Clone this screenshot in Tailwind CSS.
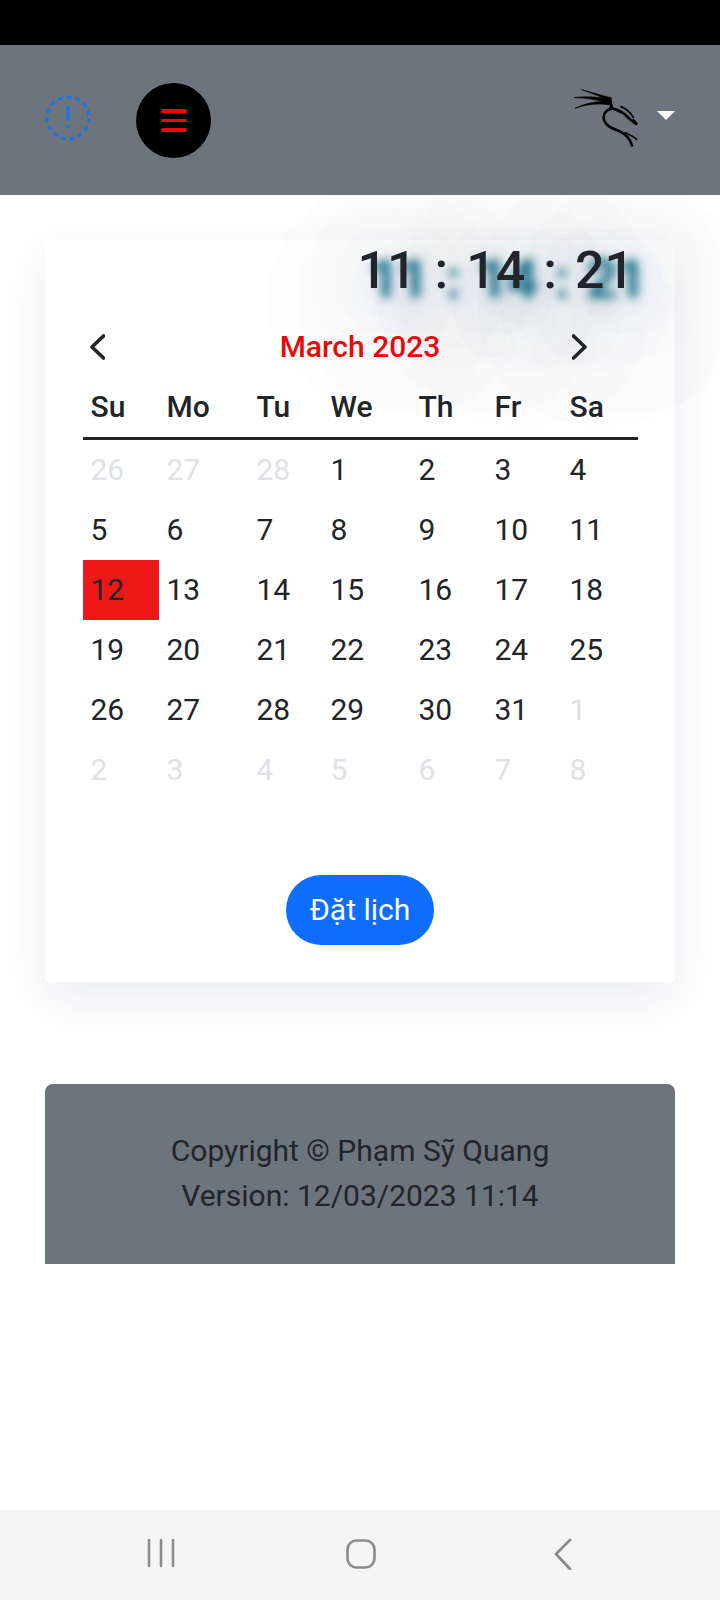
<!DOCTYPE html>
<html>
<head>
<meta charset="utf-8">
<script src="https://cdn.jsdelivr.net/npm/@tailwindcss/browser@4"></script>
</head>
<body class="font-['Roboto',sans-serif] bg-white text-[#212529]">
<div class="w-[720px] h-[1600px] flex flex-col overflow-hidden">
  <div class="h-[45px] bg-black shrink-0"></div>
  <header class="h-[150px] bg-[#6c757d] shrink-0 flex items-start relative z-10">
    <svg class="ml-[45px] mt-[50px] w-[46px] h-[46px]" viewBox="0 0 46 46" fill="none">
      <circle cx="23" cy="23" r="21" stroke="#1f74e4" stroke-width="3" stroke-dasharray="5 3.8"/>
      <path d="M23 11v15" stroke="#1f74e4" stroke-width="3.4"/>
      <circle cx="23" cy="32" r="2" fill="#1f74e4"/>
    </svg>
    <div class="ml-[45px] mt-[38px] w-[75px] h-[75px] rounded-full bg-black flex flex-col items-center justify-center gap-[6px]">
      <span class="block w-[26px] h-[3.5px] rounded-full bg-[#ff0000]"></span>
      <span class="block w-[26px] h-[3.5px] rounded-full bg-[#ff0000]"></span>
      <span class="block w-[26px] h-[3.5px] rounded-full bg-[#ff0000]"></span>
    </div>
    <svg class="ml-[362px] mt-[43px] w-[67px] h-[59px]" viewBox="100 55 200 175" fill="none" stroke="#000" stroke-linecap="round">
      <path d="M127 60 L214 84 L210 95 C185 80 155 70 127 60Z" fill="#000" stroke-width="2"/>
      <path d="M105 83 C140 78 180 82 210 88 L208 99 C175 90 140 84 105 83Z" fill="#000" stroke-width="2"/>
      <path d="M107 115 C135 100 175 92 208 95 L214 105 C175 100 140 102 107 115Z" fill="#000" stroke-width="2"/>
      <path d="M210 86 L216 116" stroke-width="9"/>
      <path d="M216 116 C198 120 190 132 192 146 C195 166 215 175 240 184 C258 192 270 205 276 226" stroke-width="8"/>
      <path d="M256 188 C270 194 282 200 290 208" stroke-width="5"/>
      <path d="M212 113 C235 120 255 128 268 146 C275 152 282 158 291 163 L280 150" stroke-width="8"/>
      <path d="M243 110 C258 116 272 128 280 142" stroke-width="5"/>
    </svg>
    <span class="ml-[17px] mt-[66px] w-0 h-0 border-x-[9px] border-x-transparent border-t-[9px] border-t-white"></span>
  </header>

  <main class="px-[45px] pt-[45px]">
    <section class="h-[742px] rounded-[8px] bg-white shadow-[0_16px_48px_rgba(40,60,110,0.09)] flex flex-col">
      <div class="h-[60px] pr-[41px] flex justify-end items-center pt-[2px] text-[52px] font-medium leading-none whitespace-pre [word-spacing:5px] [text-shadow:12px_9px_9px_rgba(20,105,135,0.95),12px_9px_14px_rgba(20,105,135,0.6),12px_14px_60px_rgba(20,100,130,0.5),12px_30px_120px_rgba(20,100,130,0.55),12px_30px_120px_rgba(20,100,130,0.55)]">11 : 14 : 21</div>
      <div class="mt-[26px] px-[38px] relative">
        <div class="h-[38px] flex items-center justify-between pt-[4px]">
          <svg class="ml-[7px] w-[15px] h-[26px]" viewBox="0 0 15 26" fill="none" stroke="#212529" stroke-width="3.6" stroke-linecap="round" stroke-linejoin="round"><path d="M13.5 2 2 13l11.5 11"/></svg>
          <span class="text-[30px] font-medium text-[#e60a0a] leading-none ml-[43px]">March 2023</span>
          <svg class="mr-[50px] w-[15px] h-[26px]" viewBox="0 0 15 26" fill="none" stroke="#212529" stroke-width="3.6" stroke-linecap="round" stroke-linejoin="round"><path d="M1.5 2 13 13 1.5 24"/></svg>
        </div>
        <div class="mt-[17px] grid grid-cols-[76px_90px_74px_88px_76px_75px_76px] text-[30px] leading-none">
          <div class="col-span-7 grid grid-cols-subgrid h-[59px] border-b-[3px] border-[#212529] font-medium items-center pt-[1px] pb-[6px]">
            <span class="pl-[7.5px]">Su</span><span class="pl-[7.5px]">Mo</span><span class="pl-[7.5px]">Tu</span><span class="pl-[7.5px]">We</span><span class="pl-[7.5px]">Th</span><span class="pl-[7.5px]">Fr</span><span class="pl-[7.5px]">Sa</span>
          </div>
          <span class="pl-[7.5px] h-[60px] flex items-center text-[#dee2e6]">26</span><span class="pl-[7.5px] h-[60px] flex items-center text-[#dee2e6]">27</span><span class="pl-[7.5px] h-[60px] flex items-center text-[#dee2e6]">28</span><span class="pl-[7.5px] h-[60px] flex items-center">1</span><span class="pl-[7.5px] h-[60px] flex items-center">2</span><span class="pl-[7.5px] h-[60px] flex items-center">3</span><span class="pl-[7.5px] h-[60px] flex items-center">4</span>
          <span class="pl-[7.5px] h-[60px] flex items-center">5</span><span class="pl-[7.5px] h-[60px] flex items-center">6</span><span class="pl-[7.5px] h-[60px] flex items-center">7</span><span class="pl-[7.5px] h-[60px] flex items-center">8</span><span class="pl-[7.5px] h-[60px] flex items-center">9</span><span class="pl-[7.5px] h-[60px] flex items-center">10</span><span class="pl-[7.5px] h-[60px] flex items-center">11</span>
          <span class="pl-[7.5px] h-[60px] flex items-center bg-[#ed1717]">12</span><span class="pl-[7.5px] h-[60px] flex items-center">13</span><span class="pl-[7.5px] h-[60px] flex items-center">14</span><span class="pl-[7.5px] h-[60px] flex items-center">15</span><span class="pl-[7.5px] h-[60px] flex items-center">16</span><span class="pl-[7.5px] h-[60px] flex items-center">17</span><span class="pl-[7.5px] h-[60px] flex items-center">18</span>
          <span class="pl-[7.5px] h-[60px] flex items-center">19</span><span class="pl-[7.5px] h-[60px] flex items-center">20</span><span class="pl-[7.5px] h-[60px] flex items-center">21</span><span class="pl-[7.5px] h-[60px] flex items-center">22</span><span class="pl-[7.5px] h-[60px] flex items-center">23</span><span class="pl-[7.5px] h-[60px] flex items-center">24</span><span class="pl-[7.5px] h-[60px] flex items-center">25</span>
          <span class="pl-[7.5px] h-[60px] flex items-center">26</span><span class="pl-[7.5px] h-[60px] flex items-center">27</span><span class="pl-[7.5px] h-[60px] flex items-center">28</span><span class="pl-[7.5px] h-[60px] flex items-center">29</span><span class="pl-[7.5px] h-[60px] flex items-center">30</span><span class="pl-[7.5px] h-[60px] flex items-center">31</span><span class="pl-[7.5px] h-[60px] flex items-center text-[#dee2e6]">1</span>
          <span class="pl-[7.5px] h-[60px] flex items-center text-[#dee2e6]">2</span><span class="pl-[7.5px] h-[60px] flex items-center text-[#dee2e6]">3</span><span class="pl-[7.5px] h-[60px] flex items-center text-[#dee2e6]">4</span><span class="pl-[7.5px] h-[60px] flex items-center text-[#dee2e6]">5</span><span class="pl-[7.5px] h-[60px] flex items-center text-[#dee2e6]">6</span><span class="pl-[7.5px] h-[60px] flex items-center text-[#dee2e6]">7</span><span class="pl-[7.5px] h-[60px] flex items-center text-[#dee2e6]">8</span>
        </div>
      </div>
      <div class="mt-[75px] flex justify-center">
        <button class="w-[148px] h-[70px] rounded-[35px] bg-[#0d6efd] text-white text-[30px] leading-none">Đặt lịch</button>
      </div>
    </section>

    <footer class="mt-[102px] h-[180px] rounded-t-[8px] bg-[#6c757d] flex flex-col items-center pt-[44px] text-[30px] leading-[45px] text-[#212529]">
      <p>Copyright © Phạm Sỹ Quang</p>
      <p>Version: 12/03/2023 11:14</p>
    </footer>
  </main>

  <nav class="mt-auto h-[90px] bg-[#f5f5f5] shrink-0 flex items-start pt-[28px]">
    <svg class="ml-[146px] w-[30px] h-[30px]" viewBox="0 0 30 30" fill="none" stroke="#8c8c8c" stroke-width="2.6" stroke-linecap="round"><path d="M3 2v26M15 2v26M27 2v26"/></svg>
    <svg class="ml-[169px] w-[32px] h-[32px]" viewBox="0 0 32 32" fill="none" stroke="#8c8c8c" stroke-width="2.6"><rect x="2.5" y="2.5" width="27" height="27" rx="9"/></svg>
    <svg class="ml-[176px] w-[20px] h-[32px]" viewBox="0 0 20 32" fill="none" stroke="#8c8c8c" stroke-width="2.8" stroke-linecap="round" stroke-linejoin="round"><path d="M17 2 3 16l14 15"/></svg>
  </nav>
</div>
</body>
</html>
